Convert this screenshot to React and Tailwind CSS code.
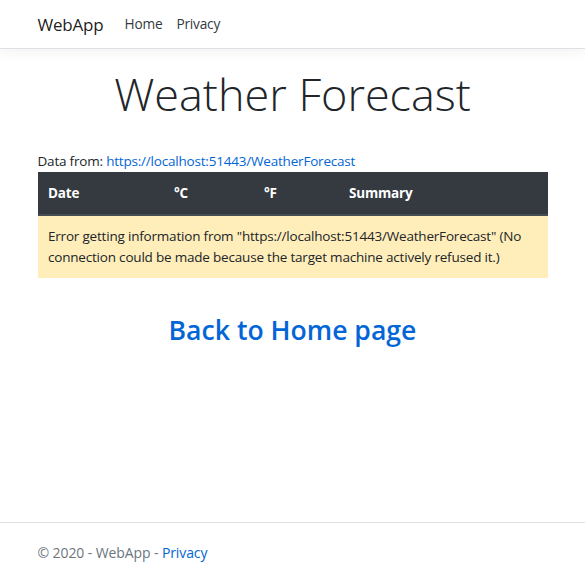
export default function App() {
  const font = { fontFamily: '"Open Sans", "Noto Sans", sans-serif' };
  return (
    <div className="flex min-h-[583px] flex-col bg-white text-[13.5px] leading-[1.5] tracking-[-0.2px] text-[#212529]" style={font}>
      <header>
        <nav className="mb-[14px] flex h-[49px] items-center border-b border-[#dee2e6] bg-white px-[14px] pt-[1px] shadow-[0_4px_12px_rgba(0,0,0,0.05)]">
          <div className="mx-auto flex w-[540px] items-center px-[15px]">
            <span className="mr-[21px] text-[17px] text-black/90">WebApp</span>
            <span className="pr-[7px] text-[13.7px] text-[#343a40]">Home</span>
            <span className="px-[7px] text-[13.7px] text-[#343a40]">Privacy</span>
          </div>
        </nav>
      </header>
      <main className="mx-auto w-[540px] px-[15px]">
        <h1 className="mb-[29px] mt-[3px] text-center text-[45px] font-light leading-[56px] tracking-normal text-[#212529]">
          Weather Forecast
        </h1>
        <p className="leading-[21px]">
          Data from: <span className="text-[#0366d6]">https://localhost:51443/WeatherForecast</span>
        </p>
        <table className="w-full border-collapse">
          <thead>
            <tr className="bg-[#343a40] text-left font-bold text-white">
              <th className="w-[126px] border-b-2 border-[#454d55] px-[10.5px] py-[10.5px] leading-[21px]">Date</th>
              <th className="w-[90px] border-b-2 border-[#454d55] px-[10.5px] py-[10.5px] leading-[21px]">°C</th>
              <th className="w-[85px] border-b-2 border-[#454d55] px-[10.5px] py-[10.5px] leading-[21px]">°F</th>
              <th className="border-b-2 border-[#454d55] px-[10.5px] py-[10.5px] leading-[21px]">Summary</th>
            </tr>
          </thead>
          <tbody>
            <tr className="bg-[#ffeeba]">
              <td colSpan={4} className="px-[10.5px] py-[10px] leading-[21px]">
                Error getting information from "https://localhost:51443/WeatherForecast" (No connection could be made because the target machine actively refused it.)
              </td>
            </tr>
          </tbody>
        </table>
        <div className="mt-[33px] text-center">
          <span className="text-[26.6px] font-semibold tracking-normal text-[#0366d6]">Back to Home page</span>
        </div>
      </main>
      <footer className="mt-auto h-[61px] border-t border-[#dee2e6] text-[14px] leading-[60px] tracking-[-0.1px] text-[#6c757d]">
        <div className="mx-auto w-[540px] px-[15px]">
          © 2020 - WebApp - <span className="text-[#0366d6]">Privacy</span>
        </div>
      </footer>
    </div>
  );
}
